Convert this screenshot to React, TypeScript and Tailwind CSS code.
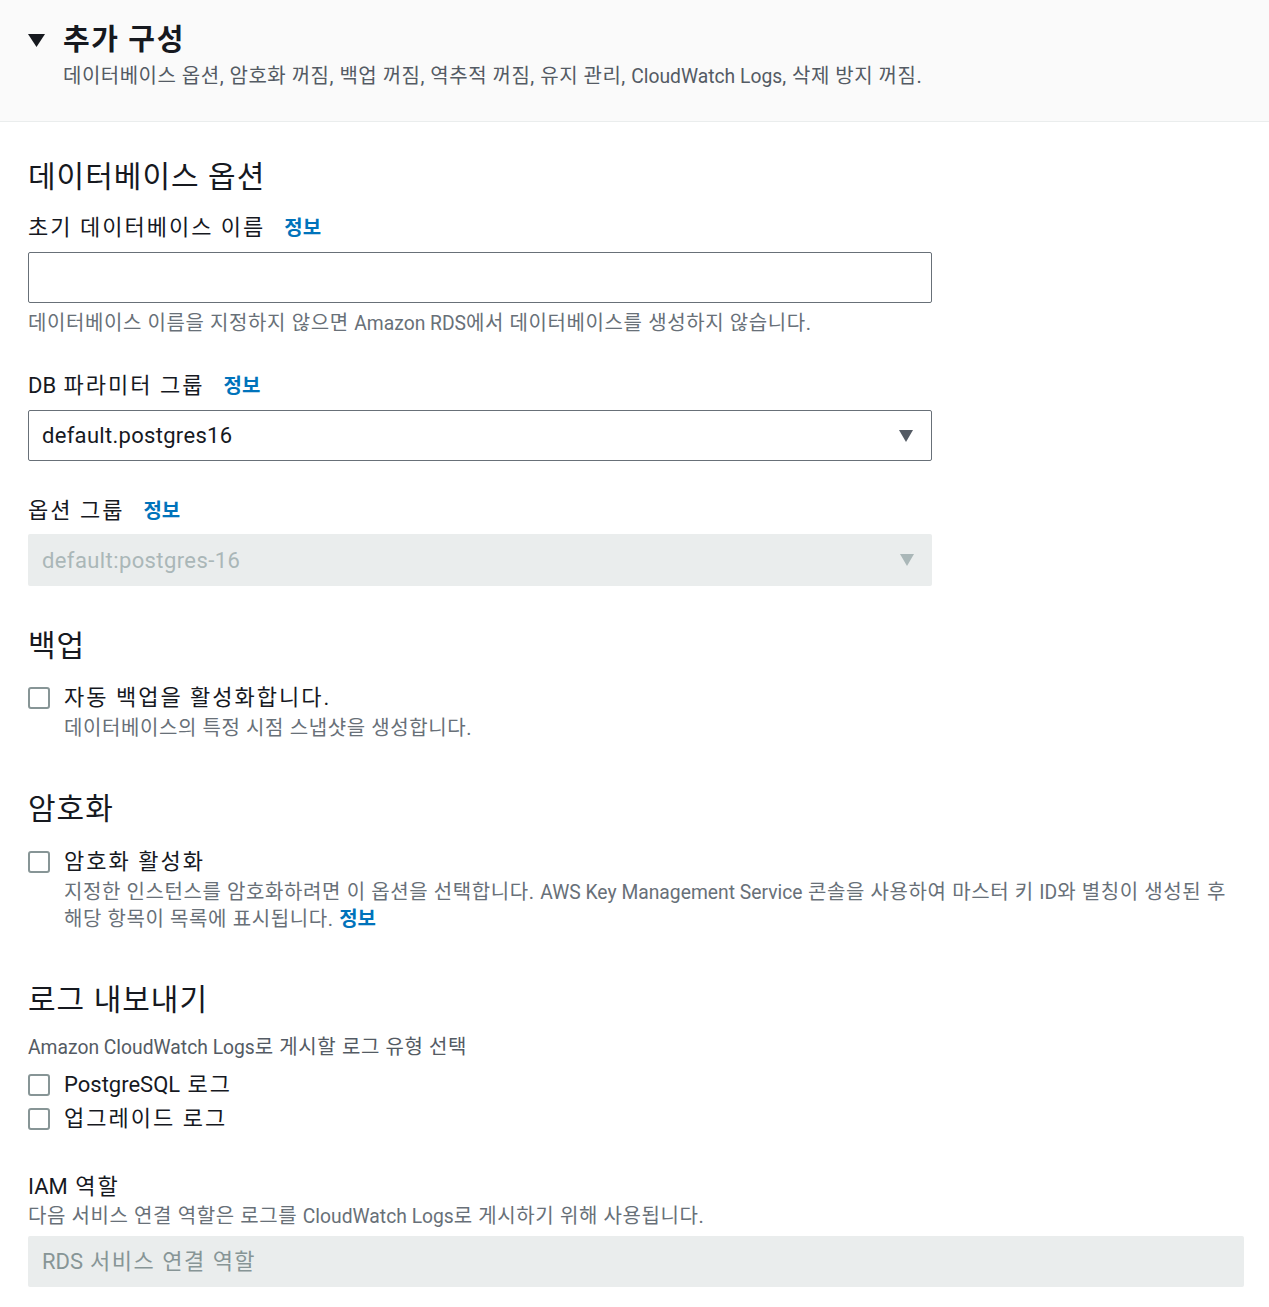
import type { ReactNode } from 'react';

const font = { fontFamily: 'Roboto, "Noto Sans CJK KR", sans-serif' };

// Hangul in the reference is set wider than Noto's, so Korean runs get tracking
// and Latin runs are reset to normal spacing.
function T({ children, small }: { children: string; small?: boolean }) {
  const parts = children.split(/([A-Za-z0-9][A-Za-z0-9.:\-]*(?: [A-Za-z0-9][A-Za-z0-9.:\-]*)*)/);
  return (
    <>
      {parts.map((p, i) =>
        i % 2 ? (
          <span key={i} className={small ? 'text-[0.965em] tracking-normal' : 'tracking-normal'}>
            {p}
          </span>
        ) : (
          p
        ),
      )}
    </>
  );
}

function Info() {
  return <span className="ml-[19px] text-[20px] font-bold tracking-normal text-[#0073bb]">정보</span>;
}

function Label({ text, info, className }: { text: string; info?: boolean; className?: string }) {
  return (
    <div className={`text-[22px] leading-[30px] tracking-[2px] text-[#16191f] ${className ?? ''}`}>
      <T>{text}</T>
      {info && <Info />}
    </div>
  );
}

function Caret({ disabled }: { disabled?: boolean }) {
  return (
    <svg width="16" height="14" viewBox="0 0 16 14" className="shrink-0">
      <path d="M1 1h14L8 13z" fill={disabled ? '#aab7b8' : '#545b64'} />
    </svg>
  );
}

function Checkbox({ label, children }: { label: string; children?: ReactNode }) {
  return (
    <div className="flex gap-[14px]">
      <div className="mt-[6px] h-[22px] w-[22px] shrink-0 rounded-[3px] border-2 border-[#879596] bg-white" />
      <div>
        <div className="text-[22px] leading-[34px] tracking-[2px] text-[#16191f]">
          <T>{label}</T>
        </div>
        {children && (
          <div className="text-[20px] leading-[26px] tracking-[0.6px] text-[#687078]">{children}</div>
        )}
      </div>
    </div>
  );
}

function Heading({ children }: { children: string }) {
  return <h2 className="text-[30px] leading-[40px] tracking-[1px] text-[#16191f]">{children}</h2>;
}

export default function App() {
  return (
    <div className="min-h-screen bg-white" style={font}>
      <div className="border-b border-[#eaeded] bg-[#fafafa] px-[28px] pt-[22px] pb-[30px]">
        <div className="flex items-center gap-[18px]">
          <svg width="17" height="14" viewBox="0 0 17 14">
            <path d="M0 1h17L8.5 14z" fill="#16191f" />
          </svg>
          <h1 className="text-[29px] font-bold leading-[36px] tracking-[1.6px] text-[#16191f]">추가 구성</h1>
        </div>
        <p className="ml-[35px] mt-[4px] whitespace-nowrap text-[20px] leading-[28px] tracking-[0.5px] text-[#545b64]">
          <T small>데이터베이스 옵션, 암호화 꺼짐, 백업 꺼짐, 역추적 꺼짐, 유지 관리, CloudWatch Logs, 삭제 방지 꺼짐.</T>
        </p>
      </div>

      <div className="px-[28px] pr-[25px] pt-[35px]">
        <Heading>데이터베이스 옵션</Heading>

        <Label text="초기 데이터베이스 이름" info className="mt-[16px]" />
        <div className="mt-[9px] h-[51px] w-[904px] rounded-[2px] border border-[#687078] bg-white" />
        <p className="mt-[6px] text-[20px] leading-[28px] tracking-[0.6px] text-[#687078]">
          <T small>데이터베이스 이름을 지정하지 않으면 Amazon RDS에서 데이터베이스를 생성하지 않습니다.</T>
        </p>

        <Label text="DB 파라미터 그룹" info className="mt-[33px]" />
        <div className="mt-[9px] flex h-[51px] w-[904px] items-center justify-between rounded-[2px] border border-[#687078] bg-white pl-[13px] pr-[17px]">
          <span className="text-[22px] tracking-[0.3px] text-[#16191f]">default.postgres16</span>
          <Caret />
        </div>

        <Label text="옵션 그룹" info className="mt-[35px]" />
        <div className="mt-[8px] flex h-[52px] w-[904px] items-center justify-between rounded-[2px] bg-[#eaeded] pl-[14px] pr-[17px]">
          <span className="text-[22px] tracking-[0.4px] text-[#aab7b8]">default:postgres-16</span>
          <Caret disabled />
        </div>

        <div className="mt-[40px]">
          <Heading>백업</Heading>
        </div>
        <div className="mt-[15px]">
          <Checkbox label="자동 백업을 활성화합니다.">데이터베이스의 특정 시점 스냅샷을 생성합니다.</Checkbox>
        </div>

        <div className="mt-[48px]">
          <Heading>암호화</Heading>
        </div>
        <div className="mt-[16px]">
          <Checkbox label="암호화 활성화">
            <span className="whitespace-nowrap">
              <T small>
                지정한 인스턴스를 암호화하려면 이 옵션을 선택합니다. AWS Key Management Service 콘솔을 사용하여 마스터 키 ID와 별칭이 생성된 후
              </T>
            </span>
            <br />
            해당 항목이 목록에 표시됩니다.{' '}
            <span className="font-bold tracking-normal text-[#0073bb]">정보</span>
          </Checkbox>
        </div>

        <div className="mt-[48px]">
          <Heading>로그 내보내기</Heading>
        </div>
        <p className="mt-[13px] text-[20px] leading-[28px] tracking-[0.6px] text-[#545b64]">
          <T small>Amazon CloudWatch Logs로 게시할 로그 유형 선택</T>
        </p>
        <div className="mt-[6px]">
          <Checkbox label="PostgreSQL 로그" />
        </div>
        <div>
          <Checkbox label="업그레이드 로그" />
        </div>

        <Label text="IAM 역할" className="mt-[36px]" />
        <p className="text-[20px] leading-[28px] tracking-[0.6px] text-[#687078]">
          <T small>다음 서비스 연결 역할은 로그를 CloudWatch Logs로 게시하기 위해 사용됩니다.</T>
        </p>
        <div className="mt-[5px] flex h-[51px] items-center rounded-[2px] bg-[#eaeded] pl-[14px]">
          <span className="text-[22px] tracking-[1.5px] text-[#879596]">
            <T>RDS 서비스 연결 역할</T>
          </span>
        </div>
      </div>
    </div>
  );
}
